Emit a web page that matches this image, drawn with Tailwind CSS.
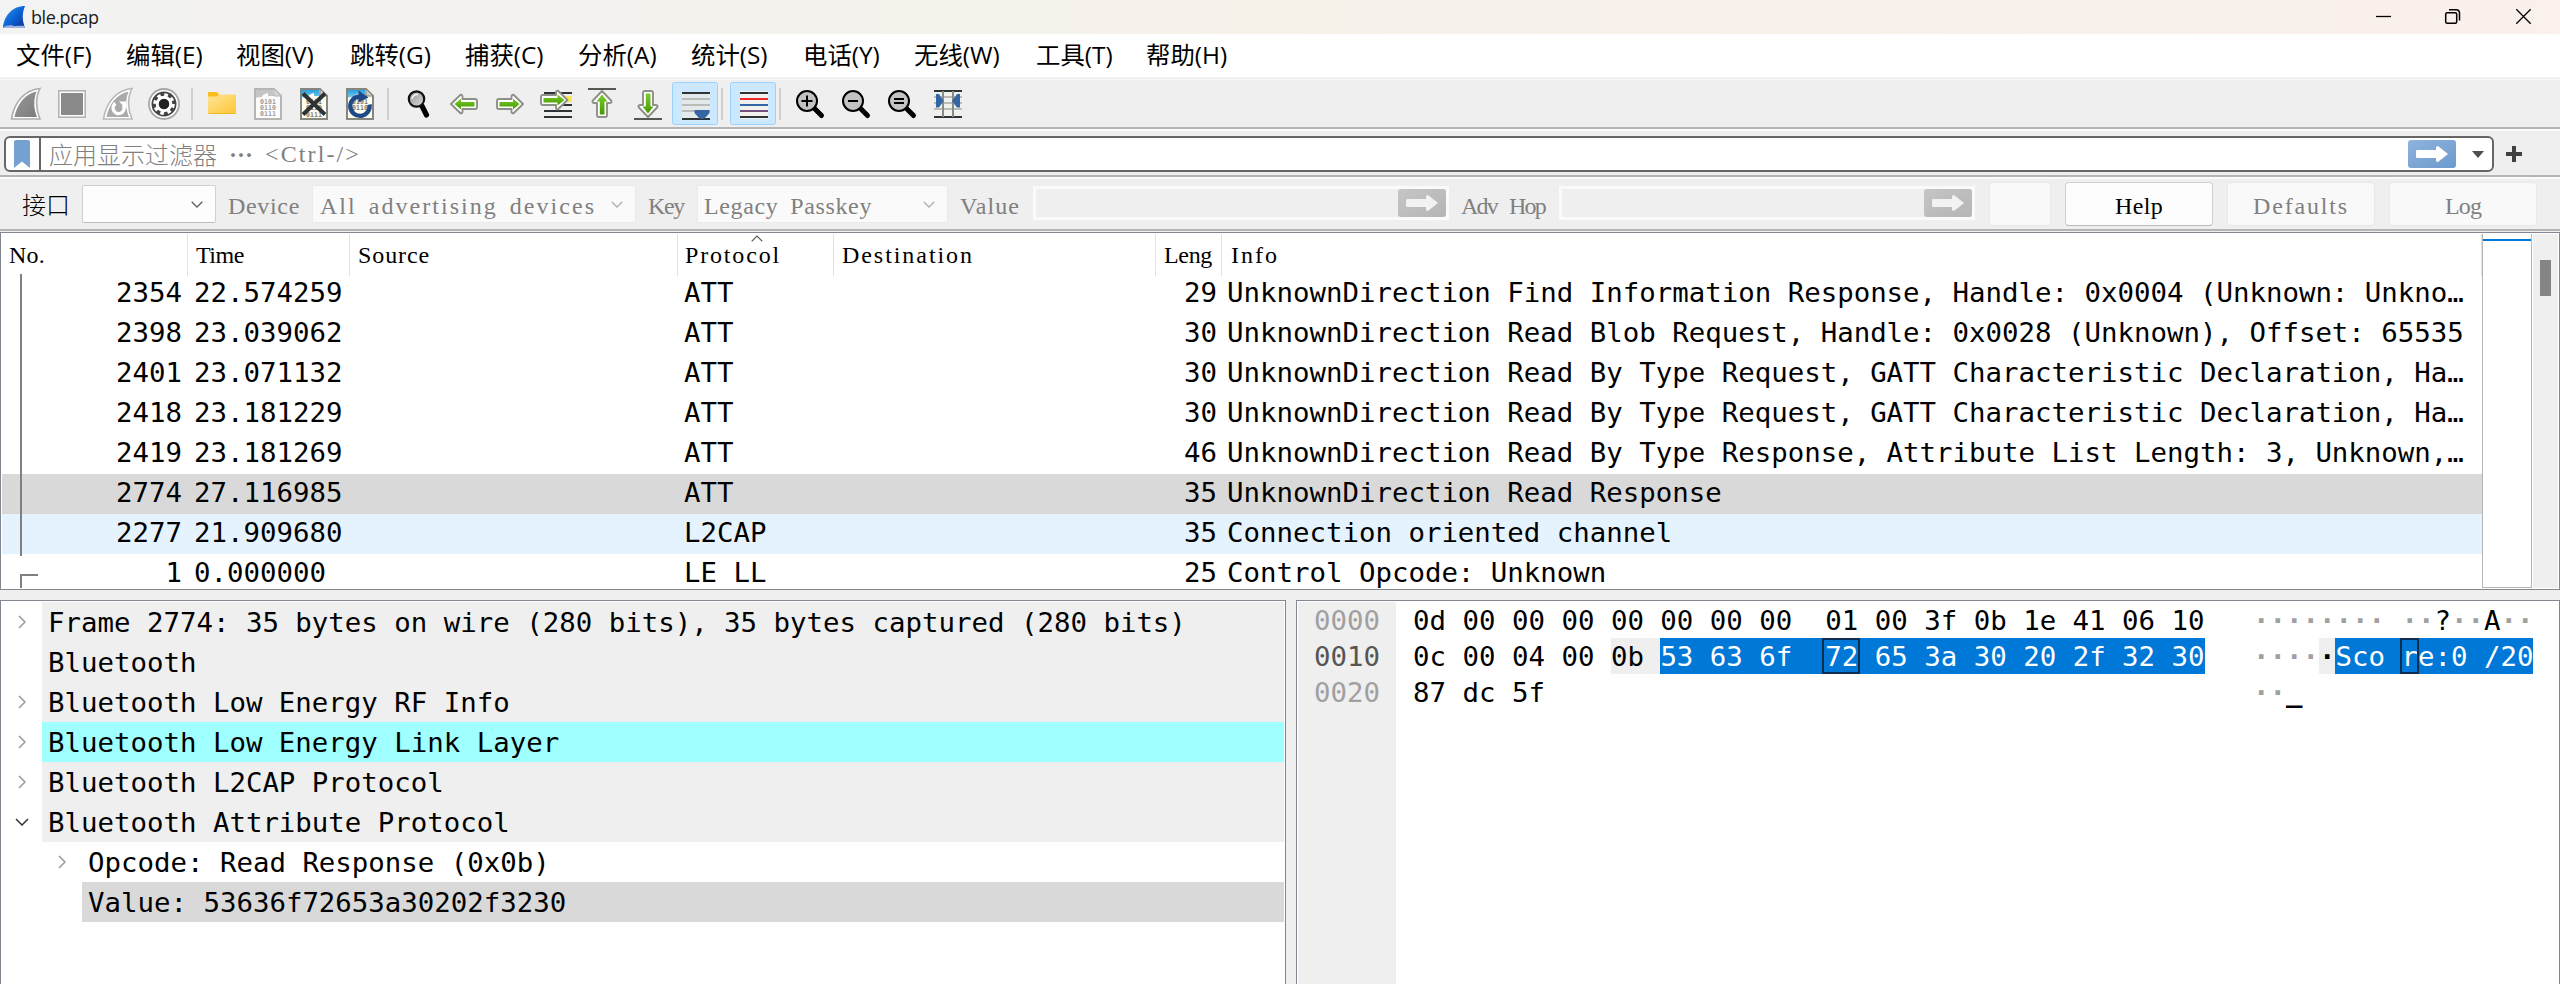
<!DOCTYPE html>
<html lang="zh-CN">
<head>
<meta charset="utf-8">
<title>ble.pcap</title>
<script src="https://cdn.jsdelivr.net/npm/@tailwindcss/browser@4"></script>
</head>
<body class="w-[2560px] h-[984px] overflow-hidden bg-[#efefef] text-black flex flex-col">

<svg width="0" height="0" class="absolute">
  <defs>
    <linearGradient id="fin" x1="0" y1="0" x2="1" y2="1"><stop offset="0" stop-color="#2b9af3"/><stop offset=".55" stop-color="#0a5fd0"/><stop offset="1" stop-color="#0b2f8a"/></linearGradient>
    <linearGradient id="gray" x1="0" y1="0" x2="1" y2="1"><stop offset="0" stop-color="#999"/><stop offset="1" stop-color="#7c7c7c"/></linearGradient>
    <linearGradient id="fold" x1="0" y1="0" x2="1" y2="1"><stop offset="0" stop-color="#ffe59a"/><stop offset="1" stop-color="#fdc632"/></linearGradient>
    <linearGradient id="green" x1="0" y1="0" x2="0" y2="1"><stop offset="0" stop-color="#7ccb2e"/><stop offset="1" stop-color="#459a00"/></linearGradient>
    <linearGradient id="lens" x1="0" y1="0" x2="1" y2="1"><stop offset="0" stop-color="#8f8f8f"/><stop offset="1" stop-color="#dedede"/></linearGradient>
    <linearGradient id="sky" x1="0" y1="0" x2="0" y2="1"><stop offset="0" stop-color="#2aa0dc"/><stop offset="1" stop-color="#7cc6ec"/></linearGradient>
  </defs>
</svg>

<!-- Title bar -->
<header class="h-[34px] shrink-0 flex items-center bg-linear-to-r from-[#f3f3f3] via-[#f6f2ea] to-[#faf0ec]">
  <svg class="ml-[2px] w-6 h-6 mb-[1px]" viewBox="2 5 24 24"><path d="M3 28 C4 15 13 6 25 6 C22 13 22 20 25 28 Z" fill="url(#fin)"/><path d="M3 28 C5 25 8 26 11 25 C15 27 20 25 24.500 26 L25 28 Z" fill="#9db2e2"/></svg>
  <span class="ml-[5px] text-[18px] leading-[34px] tracking-[-0.45px] font-['Open_Sans',sans-serif] text-[#1a1a1a]">ble.pcap</span>
  <svg class="ml-auto w-[184px] h-[34px]" viewBox="2376 0 184 34" fill="none" stroke="#000" stroke-width="1.300">
    <path d="M2376 16.500 H2391"/>
    <rect x="2445.700" y="12.700" width="11" height="10.600" rx="1.500" stroke-width="1.500"/><path d="M2449 9.700 H2456 Q2459.500 9.700 2459.500 13 V20.500" stroke-width="1.500"/>
    <path d="M2516.300 9.300 L2530.700 23.700 M2530.700 9.300 L2516.300 23.700"/>
  </svg>
</header>

<!-- Menu bar -->
<nav class="h-[45px] shrink-0 bg-white border-b-2 border-[#f2f2f2] pl-4 flex text-[24.4px] leading-[42px] whitespace-nowrap font-['Open_Sans','Noto_Sans_CJK_SC',sans-serif]">
  <span class="w-[110px]">文件(F)</span>
  <span class="w-[110px]">编辑(E)</span>
  <span class="w-[114px]">视图(V)</span>
  <span class="w-[115px]">跳转(G)</span>
  <span class="w-[113px]">捕获(C)</span>
  <span class="w-[113px]">分析(A)</span>
  <span class="w-[112px]">统计(S)</span>
  <span class="w-[111px]">电话(Y)</span>
  <span class="w-[122px]">无线(W)</span>
  <span class="w-[110px]">工具(T)</span>
  <span>帮助(H)</span>
</nav>

<!-- Main toolbar -->
<div class="h-[52px] shrink-0 border-t border-[#f7f7f7] pl-1 flex items-start">
  <svg class="w-[46px] h-12" viewBox="4 80 46 48"><path d="M11.500 119 C14 103 24 90 40 88.500 C35 98 36 110 40 119 Z" fill="#fff" stroke="#adadad" stroke-width="1.600"/><path d="M14.500 117 C17 104 25 94 36.500 91.500 C33 100 34 110 37 117 Z" fill="url(#gray)"/></svg>
  <svg class="w-[46px] h-12" viewBox="50 80 46 48"><rect x="58.800" y="90.800" width="26.400" height="26.400" fill="#fff" stroke="#b3b3b3" stroke-width="1.600"/><rect x="61" y="93" width="22" height="22" fill="#8a8a8a"/></svg>
  <svg class="w-[46px] h-12" viewBox="96 80 46 48"><path d="M103.500 119 C106 103 116 90 132 88.500 C127 98 128 110 132 119 Z" fill="#fff" stroke="#b8b8b8" stroke-width="1.600"/><path d="M106.500 117 C109 104 117 94 128.500 91.500 C125 100 126 110 129 117 Z" fill="#aaa"/><path d="M115.500 103.500 A5.500 5.500 0 1 0 124 107 V102" fill="none" stroke="#fff" stroke-width="3.400"/><path d="M119 101.500 H126.500 V109 Z" fill="#fff"/></svg>
  <svg class="w-[46px] h-12" viewBox="142 80 46 48"><circle cx="164" cy="104" r="15" fill="#fff" stroke="#a6a6a6" stroke-width="1.800"/><circle cx="164" cy="104" r="12.500" fill="#434343"/><circle cx="164" cy="104" r="6.800" fill="none" stroke="#fff" stroke-width="3"/><circle cx="164" cy="104" r="9.200" fill="none" stroke="#fff" stroke-width="3.200" stroke-dasharray="3.600 3.625"/><circle cx="164" cy="104" r="5" fill="#222"/></svg>
  <i class="w-3 h-8 mt-2 pl-[3px]"><i class="block w-[2px] h-8 bg-[#cfcfcf]"></i></i>
  <svg class="w-[46px] h-12" viewBox="200 80 46 48"><path d="M208 93 q0-1 1-1 H216.500 q1 0 1.500 1 L219 95 H234 V100 H208 Z" fill="#fbbc1e"/><path d="M208 96.500 H217 L219.500 94.500 H235 q1 0 1 1 V113 q0 1-1 1 H209 q-1 0-1-1 Z" fill="url(#fold)"/><path d="M208.500 113.500 H235.500" stroke="#f2b820" stroke-width="1"/></svg>
  <svg class="w-[46px] h-12" viewBox="246 80 46 48"><path d="M255 89 H274 L281 96 V119 H255 Z" fill="#fcfcfc" stroke="#b5b5b5" stroke-width="2"/><path d="M256 90 H273 L274 96 H268 V93 Q263 94 261.500 97 L256 97.500 Z" fill="#c4c4c4"/><path d="M274 89 V96 H281 Z" fill="#d8d8d8" stroke="#b5b5b5"/><g font-family="DejaVu Sans Mono" font-size="6.600" fill="#9b9b9b" font-weight="bold"><text x="260" y="104">0101</text><text x="260" y="110">0110</text><text x="260" y="116">0111</text></g></svg>
  <svg class="w-[46px] h-12" viewBox="292 80 46 48"><path d="M301 89 H320 L327 96 V119 H301 Z" fill="#fdfdf0" stroke="#85877e" stroke-width="2"/><path d="M302 90 H319 L320 96 H314 V93 Q309 94 307.500 97 L302 97.500 Z" fill="url(#sky)"/><path d="M320 89 V96 H327 Z" fill="#c9cac2" stroke="#85877e"/><g font-family="DejaVu Sans Mono" font-size="6.600" fill="#7c7c74" font-weight="bold"><text x="306" y="104">0101</text><text x="306" y="110">0110</text><text x="306" y="117">0111</text></g><path d="M303 93.500 L325 114.500 M325 93.500 L303 114.500" stroke="#2e3436" stroke-width="4"/></svg>
  <svg class="w-[46px] h-12" viewBox="338 80 46 48"><path d="M347 89 H366 L373 96 V119 H347 Z" fill="#fdfdf0" stroke="#85877e" stroke-width="2"/><path d="M348 90 H365 L366 96 H360 V93 Q355 94 353.500 97 L348 97.500 Z" fill="url(#sky)"/><path d="M366 89 V96 H373 Z" fill="#c9cac2" stroke="#85877e"/><g font-family="DejaVu Sans Mono" font-size="6.600" fill="#7c7c74" font-weight="bold"><text x="352" y="104">0101</text><text x="352" y="110">0110</text></g><path d="M369.500 104.500 A9.700 9.700 0 1 1 360 96.500" fill="none" stroke="#204a87" stroke-width="4.400"/><path d="M358.500 90.500 L368.500 97.500 L358.500 102.500 Z" fill="#204a87"/></svg>
  <i class="w-3 h-8 mt-2 pl-[3px]"><i class="block w-[2px] h-8 bg-[#cfcfcf]"></i></i>
  <svg class="w-[46px] h-12" viewBox="396 80 46 48"><path d="M422 106 L426.500 115" stroke="#000" stroke-width="5.200" stroke-linecap="round"/><circle cx="416.500" cy="99" r="7.700" fill="url(#lens)" stroke="#111" stroke-width="2.200"/><path d="M412 99 A5 5 0 0 1 418 94.500" fill="none" stroke="#eee" stroke-width="1.800"/></svg>
  <svg class="w-[46px] h-12" viewBox="442 80 46 48"><path d="M451 104 L460.500 94.800 Q462.500 94.500 462.500 97 V99 H475 Q477 99 477 101 V107 Q477 109 475 109 H462.500 V111.500 Q462.500 113.500 460.500 113.200 Z" fill="#fff" stroke="#8d8f88" stroke-width="1.900" stroke-linejoin="round"/><path d="M454.500 104 L461 98.500 V102 H474.500 V106.500 H461 V109.500 Z" fill="url(#green)"/></svg>
  <svg class="w-[46px] h-12" viewBox="488 80 46 48"><path d="M523 104 L513.500 94.800 Q511.500 94.500 511.500 97 V99 H499 Q497 99 497 101 V107 Q497 109 499 109 H511.500 V111.500 Q511.500 113.500 513.500 113.200 Z" fill="#fff" stroke="#8d8f88" stroke-width="1.900" stroke-linejoin="round"/><path d="M519.500 104 L513 98.500 V102 H499.500 V106.500 H513 V109.500 Z" fill="url(#green)"/></svg>
  <svg class="w-[46px] h-12" viewBox="534 80 46 48"><path d="M544 93 H572 M544 105 H572 M544 111 H572 M544 117 H572" stroke="#2e3436" stroke-width="2"/><path d="M562 96 H572 V102 H562 Z" fill="#fce94f"/><path d="M567.500 100 L558 90.800 Q556 90.500 556 93 V95 H543 Q541 95 541 97 V103 Q541 105 543 105 H556 V107.500 Q556 109.500 558 109.200 Z" fill="#fff" stroke="#8d8f88" stroke-width="1.900" stroke-linejoin="round"/><path d="M564.500 100 L557.500 94.500 V98 H543.500 V102.500 H557.500 V105.500 Z" fill="url(#green)"/></svg>
  <svg class="w-[46px] h-12" viewBox="580 80 46 48"><path d="M588 89 H616" stroke="#555753" stroke-width="2"/><path d="M602 91 L611.500 101 Q612 103 609.500 103 H607 V115 Q607 117 605 117 H599 Q597 117 597 115 V103 H594.500 Q592 103 592.500 101 Z" fill="#fff" stroke="#8d8f88" stroke-width="1.900" stroke-linejoin="round"/><path d="M602 94.500 L607.500 101.500 H604.500 V114.500 H599.800 V101.500 H596.500 Z" fill="url(#green)"/></svg>
  <svg class="w-[46px] h-12" viewBox="626 80 46 48"><path d="M634 119 H662" stroke="#555753" stroke-width="2"/><path d="M648 117 L657.500 107 Q658 105 655.500 105 H653 V93 Q653 91 651 91 H645 Q643 91 643 93 V105 H640.500 Q638 105 638.500 107 Z" fill="#fff" stroke="#8d8f88" stroke-width="1.900" stroke-linejoin="round"/><path d="M648 113.500 L653.500 106.500 H650.500 V93.500 H645.800 V106.500 H642.500 Z" fill="url(#green)"/></svg>
  <svg class="w-[46px] h-12" viewBox="672 80 46 48"><rect x="672.500" y="82.500" width="45" height="42" rx="2" fill="#cce8ff" stroke="#99d1ff"/><rect x="682" y="92" width="28" height="28" fill="#e4eaec"/><path d="M682 93 H710 M682 119 H710" stroke="#2e3436" stroke-width="2"/><path d="M682 99 H710 M682 105 H710 M682 111 H710" stroke="#babdb6" stroke-width="2"/><path d="M694.500 110 H709.500 V113 L705 118 Q702 120 699 118 L694.500 113 Z" fill="#3465a4"/></svg>
  <i class="w-3 h-8 mt-2 pl-[3px]"><i class="block w-[2px] h-8 bg-[#cfcfcf]"></i></i>
  <svg class="w-[46px] h-12" viewBox="730 80 46 48"><rect x="730.500" y="82.500" width="45" height="42" rx="2" fill="#cce8ff" stroke="#99d1ff"/><rect x="740" y="91" width="28" height="28" fill="#f0f0ef"/><path d="M740 93 H768 M740 117 H768" stroke="#2e3436" stroke-width="2"/><path d="M740 99 H768" stroke="#ef2929" stroke-width="2"/><path d="M740 105 H768" stroke="#3465a4" stroke-width="2"/><path d="M740 111 H768" stroke="#75507b" stroke-width="2"/></svg>
  <i class="w-3 h-8 mt-2 pl-[3px]"><i class="block w-[2px] h-8 bg-[#cfcfcf]"></i></i>
  <svg class="w-[46px] h-12" viewBox="788 80 46 48"><path d="M815 109 L821.500 115.500" stroke="#000" stroke-width="5" stroke-linecap="round"/><circle cx="807" cy="101" r="10" fill="#c3c3c3" stroke="#000" stroke-width="2"/><path d="M801.500 101 H812.500 M807 95.500 V106.500" stroke="#000" stroke-width="2"/></svg>
  <svg class="w-[46px] h-12" viewBox="834 80 46 48"><path d="M861 109 L867.500 115.500" stroke="#000" stroke-width="5" stroke-linecap="round"/><circle cx="853" cy="101" r="10" fill="#c3c3c3" stroke="#000" stroke-width="2"/><path d="M848 101 H858" stroke="#000" stroke-width="2"/></svg>
  <svg class="w-[46px] h-12" viewBox="880 80 46 48"><path d="M907 109 L913.500 115.500" stroke="#000" stroke-width="5" stroke-linecap="round"/><circle cx="899" cy="101" r="10" fill="#c3c3c3" stroke="#000" stroke-width="2"/><path d="M894 99 H904 M894 103 H904" stroke="#000" stroke-width="2"/></svg>
  <svg class="w-[46px] h-12" viewBox="926 80 46 48"><rect x="934" y="90" width="28" height="28" fill="#f0f0ef"/><path d="M934 97 H962 M934 103 H962 M934 109 H962" stroke="#babdb6" stroke-width="2"/><path d="M934 91 H962 M934 117 H962" stroke="#2e3436" stroke-width="2"/><path d="M943 91 V117 M953 91 V117" stroke="#888a85" stroke-width="2"/><path d="M936 94 L939 94 L943.500 101 L939 107.500 H936 Z M960 94 L957 94 L952 101 L957 107.500 H960 Z" fill="#3465a4"/></svg>
</div>

<!-- Display filter -->
<div class="h-12 shrink-0 -mt-1 border-t-2 border-[#b5b5b5]">
  <div class="border-t-2 border-[#fafafa] pl-1 flex items-start pt-[5px]">
    <div class="w-[2490px] h-9 border-2 border-[#666] rounded-[6px] bg-white flex items-center overflow-hidden">
      <div class="w-[35px] h-full border-r-2 border-[#666] flex justify-center pt-[2px] shrink-0 pr-[1px]"><svg class="w-4 h-7" viewBox="0 0 16 28"><path d="M0 2 Q0 0 2 0 H14 Q16 0 16 2 V28 L8 21.500 L0 28 Z" fill="#74a0d2"/></svg></div>
      <div class="pl-2 flex text-[#808080] text-[24px] leading-8 font-['Noto_Sans_CJK_SC',sans-serif] whitespace-pre"><span class="font-light">应用显示过滤器</span><span class="w-12 text-center font-bold">⋯</span><span class="font-['Liberation_Serif',serif]" data-cell>&lt;Ctrl-/&gt;</span></div>
      <div class="ml-auto w-12 h-7 rounded-[3px] bg-linear-to-br from-[#8fb3dd] to-[#6c9acd] mr-4 flex items-center justify-center"><svg class="w-8 h-4" viewBox="0 0 32 16"><path d="M1.500 4 H20 V1.500 Q20 0 22 0 L32 8 L22 16 Q20 16 20 14.500 V12 H1.500 Q0 12 0 11 V5 Q0 4 1.500 4 Z" fill="#fff"/></svg></div>
      <svg class="w-3 h-[7px] mr-2" viewBox="0 0 12 7"><path d="M0 0 H12 L6 7 Z" fill="#4d4d4d"/></svg>
    </div>
    <svg class="w-4 h-4 ml-3 mt-[10px]" viewBox="0 0 16 16"><path d="M8 0 V16 M0 8 H16" stroke="#404040" stroke-width="4"/></svg>
  </div>
</div>

<!-- Interface toolbar -->
<div class="h-[54px] shrink-0 border-t-2 border-[#b5b5b5]">
  <div class="h-[52px] border-t-2 border-[#fafafa] flex items-center text-[24px] leading-[38px] text-[#808080] font-['Liberation_Serif',serif] whitespace-nowrap">
    <span class="w-[82px] pl-[22px] text-black text-[24px] font-light font-['Noto_Sans_CJK_SC',sans-serif] shrink-0">接口</span>
    <div class="w-[134px] h-[38px] bg-[#fdfdfd] border border-[#d0d0d0] border-b-[#bbb] rounded-[2px] flex items-center justify-end pr-3 shrink-0"><svg class="w-3 h-[7px]" viewBox="0 0 12 7"><path d="M.7 .7 L6 6 L11.300 .7" fill="none" stroke="#606060" stroke-width="1.300"/></svg></div>
    <span class="w-[96px] pl-3 pt-1 shrink-0"><span data-cell>Device</span></span>
    <div class="w-[324px] h-[38px] bg-[#fafafa] border border-[#eaeaea] flex items-center justify-between pl-[7px] pr-3 shrink-0"><span class="pt-1" data-cell>All advertising devices</span><svg class="w-3 h-[7px]" viewBox="0 0 12 7"><path d="M.7 .7 L6 6 L11.300 .7" fill="none" stroke="#b0b0b0" stroke-width="1.300"/></svg></div>
    <span class="w-[61px] pl-3 pt-1 shrink-0"><span data-cell>Key</span></span>
    <div class="w-[251px] h-[38px] bg-[#fafafa] border border-[#eaeaea] flex items-center justify-between pl-[6px] pr-3 shrink-0"><span class="pt-1" data-cell>Legacy Passkey</span><svg class="w-3 h-[7px]" viewBox="0 0 12 7"><path d="M.7 .7 L6 6 L11.300 .7" fill="none" stroke="#b0b0b0" stroke-width="1.300"/></svg></div>
    <span class="w-[85px] pl-3 pt-1 shrink-0"><span data-cell>Value</span></span>
    <div class="w-[416px] h-[34px] mb-[2px] border-[3px] border-[#fafafa] flex justify-end shrink-0"><div class="w-12 h-7 rounded-[3px] bg-linear-to-br from-[#c5c5c5] to-[#b5b5b5] flex items-center justify-center"><svg class="w-8 h-4" viewBox="0 0 32 16"><path d="M1.500 4 H20 V1.500 Q20 0 22 0 L32 8 L22 16 Q20 16 20 14.500 V12 H1.500 Q0 12 0 11 V5 Q0 4 1.500 4 Z" fill="#f2f2f2"/></svg></div></div>
    <span class="w-[110px] pl-3 pt-1 shrink-0"><span data-cell>Adv Hop</span></span>
    <div class="w-[416px] h-[34px] mb-[2px] border-[3px] border-[#fafafa] flex justify-end shrink-0"><div class="w-12 h-7 rounded-[3px] bg-linear-to-br from-[#c5c5c5] to-[#b5b5b5] flex items-center justify-center"><svg class="w-8 h-4" viewBox="0 0 32 16"><path d="M1.500 4 H20 V1.500 Q20 0 22 0 L32 8 L22 16 Q20 16 20 14.500 V12 H1.500 Q0 12 0 11 V5 Q0 4 1.500 4 Z" fill="#f2f2f2"/></svg></div></div>
    <div class="ml-[14px] w-[62px] h-11 bg-[#f9f9f9] border border-[#e8e8e8] rounded-[4px] shrink-0"></div>
    <div class="ml-[14px] w-[148px] h-11 bg-[#fdfdfd] border border-[#d0d0d0] border-b-[#b8b8b8] rounded-[4px] shrink-0 text-center text-black pt-1"><span data-cell>Help</span></div>
    <div class="ml-[14px] w-[148px] h-11 bg-[#f9f9f9] border border-[#e8e8e8] rounded-[4px] shrink-0 text-center pt-1"><span data-cell>Defaults</span></div>
    <div class="ml-[14px] w-[148px] h-11 bg-[#f9f9f9] border border-[#e8e8e8] rounded-[4px] shrink-0 text-center pt-1"><span data-cell>Log</span></div>
  </div>
</div>
<div class="h-[3px] shrink-0 border-t-2 border-[#b5b5b5]"></div>

<!-- Packet list -->
<section class="h-[358px] shrink-0 border border-[#828790] bg-white p-px flex">
  <div class="w-[2480px] h-[354px] overflow-hidden relative shrink-0">
    <div class="h-10 grid grid-cols-[186px_162px_328px_156px_322px_66px_1fr] text-[24px] leading-[42px] font-['Liberation_Serif',serif] whitespace-nowrap">
      <div class="border-r border-[#e2e2e2] pl-[7px]"><span data-cell>No.</span></div>
      <div class="border-r border-[#e2e2e2] pl-2"><span data-cell>Time</span></div>
      <div class="border-r border-[#e2e2e2] pl-2"><span data-cell>Source</span></div>
      <div class="border-r border-[#e2e2e2] pl-[7px] relative"><span data-cell>Protocol</span><svg class="absolute left-[73px] top-[1px] w-3 h-[7px]" viewBox="0 0 12 7"><path d="M.7 6.300 L6 1 L11.300 6.300" fill="none" stroke="#555" stroke-width="1.200"/></svg></div>
      <div class="border-r border-[#e2e2e2] pl-2"><span data-cell>Destination</span></div>
      <div class="border-r border-[#e2e2e2] pl-2"><span data-cell>Leng</span></div>
      <div class="border-r border-[#e2e2e2] pl-[9px]"><span data-cell>Info</span></div>
    </div>
    <div class="text-[27.4px] leading-[38px] font-['DejaVu_Sans_Mono',monospace] whitespace-nowrap *:h-10 *:grid *:grid-cols-[182px_494px_477px_62px_1fr]">
      <div><span class="text-right pr-[2px]">2354</span><span class="pl-[10px]">22.574259</span><span class="pl-[6px]">ATT</span><span class="text-right">29</span><span class="pl-[10px]">UnknownDirection Find Information Response, Handle: 0x0004 (Unknown: Unkno…</span></div>
      <div><span class="text-right pr-[2px]">2398</span><span class="pl-[10px]">23.039062</span><span class="pl-[6px]">ATT</span><span class="text-right">30</span><span class="pl-[10px]">UnknownDirection Read Blob Request, Handle: 0x0028 (Unknown), Offset: 65535</span></div>
      <div><span class="text-right pr-[2px]">2401</span><span class="pl-[10px]">23.071132</span><span class="pl-[6px]">ATT</span><span class="text-right">30</span><span class="pl-[10px]">UnknownDirection Read By Type Request, GATT Characteristic Declaration, Ha…</span></div>
      <div><span class="text-right pr-[2px]">2418</span><span class="pl-[10px]">23.181229</span><span class="pl-[6px]">ATT</span><span class="text-right">30</span><span class="pl-[10px]">UnknownDirection Read By Type Request, GATT Characteristic Declaration, Ha…</span></div>
      <div><span class="text-right pr-[2px]">2419</span><span class="pl-[10px]">23.181269</span><span class="pl-[6px]">ATT</span><span class="text-right">46</span><span class="pl-[10px]">UnknownDirection Read By Type Response, Attribute List Length: 3, Unknown,…</span></div>
      <div class="bg-[#d9d9d9]"><span class="text-right pr-[2px]">2774</span><span class="pl-[10px]">27.116985</span><span class="pl-[6px]">ATT</span><span class="text-right">35</span><span class="pl-[10px]">UnknownDirection Read Response</span></div>
      <div class="bg-[#e5f3ff]"><span class="text-right pr-[2px]">2277</span><span class="pl-[10px]">21.909680</span><span class="pl-[6px]">L2CAP</span><span class="text-right">35</span><span class="pl-[10px]">Connection oriented channel</span></div>
      <div><span class="text-right pr-[2px]">1</span><span class="pl-[10px]">0.000000</span><span class="pl-[6px]">LE LL</span><span class="text-right">25</span><span class="pl-[10px]">Control Opcode: Unknown</span></div>
    </div>
    <svg class="absolute left-0 top-0 w-10 h-[354px]" viewBox="2 234 40 354" fill="none" stroke="#808080" stroke-width="2"><path d="M21 274 V556 M38 575 H21 V588"/></svg>
  </div>
  <div class="w-[50px] h-[354px] border-x border-b border-[#b5b5b5] pt-[5px] shrink-0"><div class="h-[2px] bg-[#0078d7]"></div></div>
  <div class="ml-[1px] flex-1 bg-[#efefef] pt-[26px] pl-[7px]"><div class="w-[11px] h-9 bg-[#858585]"></div></div>
</section>

<!-- Details and bytes -->
<main class="flex-1 mt-[10px] flex gap-[10px] text-[27.4px] font-['DejaVu_Sans_Mono',monospace] whitespace-nowrap">
  <section class="w-[1286px] h-[384px] border border-b-0 border-[#828790] bg-white p-px leading-[42px]">
    <div class="flex h-10"><div class="w-10 pl-4 pt-[13px]"><svg class="w-2 h-[14px]" viewBox="0 0 8 14"><path d="M1 1 L7 7 L1 13" fill="none" stroke="#999" stroke-width="1.500"/></svg></div><div class="flex-1 h-10 bg-[#efefef] pl-[6px]">Frame 2774: 35 bytes on wire (280 bits), 35 bytes captured (280 bits)</div></div>
    <div class="flex h-10"><div class="w-10"></div><div class="flex-1 h-10 bg-[#efefef] pl-[6px]">Bluetooth</div></div>
    <div class="flex h-10"><div class="w-10 pl-4 pt-[13px]"><svg class="w-2 h-[14px]" viewBox="0 0 8 14"><path d="M1 1 L7 7 L1 13" fill="none" stroke="#999" stroke-width="1.500"/></svg></div><div class="flex-1 h-10 bg-[#efefef] pl-[6px]">Bluetooth Low Energy RF Info</div></div>
    <div class="flex h-10"><div class="w-10 pl-4 pt-[13px]"><svg class="w-2 h-[14px]" viewBox="0 0 8 14"><path d="M1 1 L7 7 L1 13" fill="none" stroke="#999" stroke-width="1.500"/></svg></div><div class="flex-1 h-10 bg-[#a0ffff] pl-[6px]">Bluetooth Low Energy Link Layer</div></div>
    <div class="flex h-10"><div class="w-10 pl-4 pt-[13px]"><svg class="w-2 h-[14px]" viewBox="0 0 8 14"><path d="M1 1 L7 7 L1 13" fill="none" stroke="#999" stroke-width="1.500"/></svg></div><div class="flex-1 h-10 bg-[#efefef] pl-[6px]">Bluetooth L2CAP Protocol</div></div>
    <div class="flex h-10"><div class="w-10 pl-[13px] pt-4"><svg class="w-[14px] h-2" viewBox="0 0 14 8"><path d="M1 1 L7 7 L13 1" fill="none" stroke="#333" stroke-width="1.500"/></svg></div><div class="flex-1 h-10 bg-[#efefef] pl-[6px]">Bluetooth Attribute Protocol</div></div>
    <div class="flex h-10 pl-10"><div class="w-10 pl-4 pt-[13px]"><svg class="w-2 h-[14px]" viewBox="0 0 8 14"><path d="M1 1 L7 7 L1 13" fill="none" stroke="#999" stroke-width="1.500"/></svg></div><div class="flex-1 h-10 pl-[6px]">Opcode: Read Response (0x0b)</div></div>
    <div class="flex h-10 pl-10"><div class="w-10"></div><div class="flex-1 h-10 bg-[#d9d9d9] pl-[6px]">Value: 53636f72653a30202f3230</div></div>
  </section>
  <section class="flex-1 h-[384px] border border-b-0 border-[#828790] bg-white pl-px pt-px flex leading-[38px]">
    <div class="w-[98px] bg-[#efefef] pl-4 text-[#a0a0a0] *:h-9"><div>0000</div><div class="text-[#555]">0010</div><div>0020</div></div>
    <div class="w-[840px] pl-[17px] *:h-9 *:whitespace-pre">
      <div>0d 00 00 00 00 00 00 00  01 00 3f 0b 1e 41 06 10</div>
      <div class="flex"><span>0c 00 04 00 </span><span class="bg-[#efefef]">0b </span><span class="bg-[#0078d7] text-white">53 63 6f  <span class="relative">72<i class="absolute -left-[3px] -top-[3px] w-[38px] h-[36px] border-2 border-[#0f2f50]"></i></span> 65 3a 30 20 2f 32 30</span></div>
      <div>87 dc 5f</div>
    </div>
    <div class="pl-[17px] text-[#a0a0a0] font-bold *:h-9 *:whitespace-pre">
      <div>········ ··<span class="text-black font-normal">?</span>··<span class="text-black font-normal">A</span>··</div>
      <div class="flex"><span>····</span><span class="bg-[#efefef] text-black">·</span><span class="bg-[#0078d7] text-white font-normal">Sco <span class="relative">r<i class="absolute -left-[1px] -top-[3px] w-[19px] h-[36px] border-2 border-[#0f2f50]"></i></span>e:0 /20</span></div>
      <div>··<span class="text-black">_</span></div>
    </div>
  </section>
</main>

<script>
  // Spread the serif labels over a fixed 12px character grid.
  const ctx = document.createElement('canvas').getContext('2d');
  ctx.font = '24px "Liberation Serif"';
  document.querySelectorAll('[data-cell]').forEach(el => {
    const t = el.textContent, glyphs = t.replace(/ /g, '');
    const ls = (12 * glyphs.length - ctx.measureText(glyphs).width) / glyphs.length;
    el.style.letterSpacing = ls + 'px';
    el.style.wordSpacing = (6 - ls) + 'px';
  });
</script>
</body>
</html>
